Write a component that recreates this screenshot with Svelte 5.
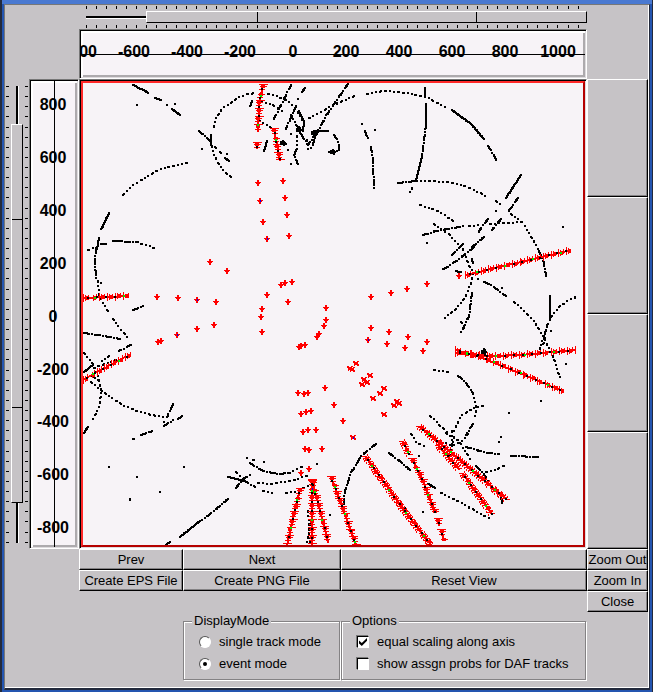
<script>
  let mode = $state('event');
  let equalScaling = $state(true);
  let showProbs = $state(false);
  let xRange = $state(100);
  let yRange = $state(49);

  const xLabels = [-800, -600, -400, -200, 0, 200, 400, 600, 800, 1000];
  const yLabels = [800, 600, 400, 200, 0, -200, -400, -600, -800];

  // Detector hits: s = unbroken run, d = dashed run, p = dotted run
  const hits = `s 132,84 148,92
s 154,97 160,99
p 136,104
p 166,104
p 174,103
s 171,108 179,114
d 198,130 210,141
s 210,134 210,144
p 201,148
p 214,146 216,148
p 219,151 222,153
p 226,153
s 224,157 228,160
p 213,126 215,117 220,109 228,103 237,97 247,93 255,92
p 267,93 275,95 283,98 292,104 298,113 303,122
p 211,145 213,153 217,162 222,169 231,177
p 186,162 171,165 157,169 145,176 130,186 120,196
s 108,212 100,229
s 98,237 96,248
p 87,249 95,246
s 100,243 105,243
s 112,240 121,240
d 124,241 137,241
p 140,243 148,245 156,248
d 95,247 94,262 95,277
p 97,280 98,293 102,302 107,310
p 100,282
p 112,318 120,329 128,338
d 132,309 143,305
d 83,332 97,334 108,336 119,338
d 130,344 118,350
p 108,355 100,361
p 115,359 95,366
p 83,352 92,363 98,378 100,388 99,405 92,418
s 83,371 93,363
d 90,375 98,379
p 90,381 102,391 115,400 130,408 140,411 150,414 163,416
d 172,403 166,416
p 163,421
d 163,425 173,419
d 177,418 182,415
s 87,426 83,432
p 132,438 136,437
d 140,434 152,430
p 108,466
p 136,476
p 159,491
p 129,498 129,501
p 183,466
d 227,498 213,510 200,520
s 199,520 179,536
s 169,541 164,544
d 249,462 262,470 277,473 288,472
p 288,472 302,465
p 246,457
p 252,459 254,460
p 263,461
p 316,463
s 227,476 243,480
d 243,480 254,486
d 235,487 242,478 249,474
p 235,471 239,475
p 257,482 268,483 283,481 293,479 308,474
p 262,490 273,492
p 285,492 297,490 308,484
p 310,523 305,544
p 307,510 309,544
s 251,100 249,105
p 260,101 270,103 283,111
d 290,84 273,118
d 304,87 301,91
p 297,98
d 295,105 285,128
d 347,83 333,103 325,115 317,130 310,148
p 308,117 335,103 356,94
p 366,93 382,90 398,91 412,93 427,97 435,101 444,106
s 451,109 470,123 483,138
d 487,145 497,161
p 258,119 272,128
s 266,140 263,150
d 290,114 303,138 307,144 316,131
s 298,110 303,121 302,130
s 313,130 327,130
d 333,134 338,142 338,150 328,151
p 296,135 296,148
d 295,149 293,154 297,163
p 290,163
p 287,149
p 290,133
p 306,139 307,148
p 285,143
p 361,123
p 374,129
d 364,130 368,140
d 370,146 372,160 373,187
d 397,182 415,180
p 415,180 428,180 447,181 467,186 485,195
p 495,200 499,203
p 510,213 522,222 530,235 538,249
p 411,187 408,193
p 495,210
s 424,87 424,95
s 425,103 425,123
d 425,123 423,140 421,155
s 421,155 415,180
s 520,174 505,197
d 517,197 507,211
p 419,204 437,210 452,220
d 487,218 476,233
d 500,218 491,229
p 489,223 520,221
d 422,234 435,230 453,227 462,225
p 468,225 480,224
p 433,223 450,235 457,243
p 426,242
d 483,236 469,248
d 462,243 449,256
d 473,246 457,259 440,270
p 462,248 467,262 472,272 471,280 465,295 453,310 443,317
s 471,258 472,262
d 471,292 468,315 460,332
p 460,321 464,327
d 455,270 462,272
p 477,278
d 483,281 490,284 505,295
p 513,301 520,307 533,320 543,337 552,355 559,377
p 501,287
d 538,250 543,262 545,275
s 549,295 549,318
p 549,318 543,335 538,350
p 546,324 542,345
p 550,316 558,306 570,298 575,296
p 550,330
p 565,363
p 540,400
p 508,412
p 562,226
p 433,369 448,371
d 457,375 462,378 472,392
p 472,392 475,407 474,418
d 472,423 465,434
p 482,405 472,407 460,415 452,432
p 429,415 448,433
d 375,443 360,455 350,472 344,490 342,508
p 329,514
d 388,452 400,461 410,470
s 427,483 434,487
p 440,492 458,501 475,510 488,517
p 418,455
p 422,511
p 404,507
p 410,433 415,441 423,445
p 467,433 460,441 450,445 442,440
p 451,430 451,446
p 445,432 458,440 469,458
d 465,446 475,449 488,452 499,453
d 510,455 538,456
p 500,436
p 498,441
d 475,465 482,472 488,482
p 485,471 495,469 504,464
d 500,497 502,504
p 453,436 449,455`.split('\n');

  const clusters = [[298, 129, 4], [282, 142, 3], [313, 132, 3], [332, 151, 3], [483, 351, 4]];

  const tracks = [
    '262,84 258,103 257,130', '256,142 256,147', '273,128 279,160',
    '465,274 571,249', '455,352 490,355 520,354 575,349', '455,349 480,356 562,390',
    '83,297 128,295', '83,379 100,369 131,353',
    '419,426 452,453 505,498', '438,445 458,468', '462,473 491,513',
    '402,441 408,453', '411,458 422,480 434,512', '437,518 438,524', '440,529 443,539',
    '365,456 400,505 430,544', '330,476 342,508 355,544',
    '299,488 293,513 286,544', '311,479 311,544', '311,480 320,513 327,541'
  ];

  const points = `258,182 260,200 263,221 267,238 283,180 285,197 287,214 289,235 210,261 227,270
157,296 178,297 197,299 216,301 214,324 197,328 177,334 158,341 161,340 281,284 285,282 292,281 267,294
288,301 262,308 261,316 262,331 326,307 326,319 324,325 319,333 317,336 305,344 299,346 301,345 371,296
391,292 407,288 371,327 368,339 389,331 387,343 408,336 405,347 356,363 350,368 352,369 370,375 364,379
367,382 362,384 384,388 380,393 373,398 397,401 399,403 394,405 384,414 298,392 304,393 308,392 325,387
334,404 343,420 301,413 306,411 311,410 303,431 308,429 316,429 427,283 427,341 423,350 353,437 305,448
309,449 322,448 309,468 301,472 459,275`.split(/\s+/).map((p) => p.split(',').map(Number));

  const diagonal = (x, y) => x > 345 && y > 360;
  const blueHits = [[260, 200], [267, 238], [197, 299], [177, 334], [368, 339], [353, 437], [312, 488]];

  const parse = (text) => text.split(' ').map((p) => p.split(',').map(Number));

  function walk(line, step) {
    const out = [];
    let carry = 0;
    for (let i = 1; i < line.length; i++) {
      const [x0, y0] = line[i - 1];
      const [x1, y1] = line[i];
      const len = Math.hypot(x1 - x0, y1 - y0);
      let t = carry;
      for (; t <= len; t += step) {
        out.push([Math.round(x0 + ((x1 - x0) * t) / len), Math.round(y0 + ((y1 - y0) * t) / len)]);
      }
      carry = t - len;
    }
    return line.length === 1 ? line : out;
  }

  const cell = ([x, y], w = 2, h = 2) => `M${x} ${y}h${w}v${h}h${-w}z`;

  // Which steps of a run carry a mark; uneven on purpose, like the hits
  const keep = {
    s: () => true,
    d: (i) => i % 11 < 6 || i % 11 === 8,
    p: (i) => [0, 1, 5, 9, 13, 14].includes(i % 18)
  };

  const hitPath = hits
    .map((row) =>
      walk(parse(row.slice(2)), 1)
        .filter((_, i) => keep[row[0]](i))
        .map((p) => cell(p))
        .join('')
    )
    .join('');

  const clusterPath = clusters
    .map(([x, y, r]) =>
      cell([x - 2, y - 1], 5, 4) +
      Array.from({ length: 14 }, (_, i) =>
        cell([x + Math.round(Math.cos(i * 2.4) * r * ((i % 4) / 3)), y + Math.round(Math.sin(i * 2.4) * r * ((i % 3) / 2.5))])
      ).join('')
    )
    .join('');

  const trackPoints = tracks.map((t) => walk(parse(t), 1));
  const trackPath = trackPoints
    .map((pts) => {
      const [a, b] = [pts[0], pts[pts.length - 1]];
      const dx = Math.abs(b[0] - a[0]);
      const dy = Math.abs(b[1] - a[1]);
      const flat = dx > dy * 1.6;
      const steep = dy > dx * 2.2;
      return pts
        .map(([x, y], i) => {
          let d = cell([x, y], flat ? 1 : 2, 2);
          const n = (i * 7) % 4;
          if (i % 17 !== 8 && [0, 2, 5].includes(i % 8)) {
            if (flat) d += cell([x, y - 3 + (n >> 1)], 1, 8 - n);
            else if (steep) d += cell([x - 3 + (n >> 1), y], 9 - n, 1);
            else d += cell([x - 3, y], 3, 1) + cell([x - 2, y + 2], 1, 2) + cell([x + 2, y - 2], 1, 2) + cell([x + 1, y + 1], 4, 1);
          }
          if (i % 8 === 2) {
            d += flat ? cell([x, y - 1], 3, 4) : cell([x - 1, y - 1], 4, 3);
          }
          return d;
        })
        .join('');
    })
    .join('');
  const pick = (every, at) =>
    trackPoints.map((pts) => pts.filter((_, i) => i % every === at).map((p) => cell(p, 2, 2)).join('')).join('');
  const trackBlack = pick(9, 4);
  const trackGreen = pick(29, 11);

  const pointPath = points
    .map(([x, y]) =>
      diagonal(x, y)
        ? cell([x - 2, y - 1], 4, 3) + cell([x - 3, y - 2]) + cell([x + 1, y - 2], 2, 1) + cell([x - 2, y + 2], 1, 1) + cell([x + 1, y + 1])
        : cell([x - 3, y], 6, 1) + cell([x - 2, y], 4, 2) + cell([x - 1, y - 2], 2, 6)
    )
    .join('');
  const bluePath = blueHits.map((p) => cell(p, 1, 2)).join('');
</script>

{#snippet ticks(count)}
  <div class="ticks">
    {#each Array(count) as _}<span></span>{/each}
  </div>
{/snippet}

<main class="window">
  <div class="panel">
    <div class="slider across">
      {@render ticks(50)}
      <input type="range" aria-label="Horizontal range" bind:value={xRange} />
      {@render ticks(50)}
    </div>

    <div class="sunken axis x-axis">
      <svg>
        <line x1="0" x2="100%" y1="23.5" y2="23.5" />
        {#each xLabels as label, i}
          <text x="{(i * 53 * 100) / 504}%" y="26">{label}</text>
        {/each}
      </svg>
    </div>

    <div class="slider down">
      {@render ticks(46)}
      <input type="range" aria-label="Vertical range" bind:value={yRange} />
      {@render ticks(46)}
    </div>

    <div class="sunken axis y-axis">
      <svg>
        <line x1="23.5" x2="23.5" y1="0" y2="100%" />
        {#each yLabels as label, i}
          <text x="22" y="{((29 + i * 52.9) * 100) / 466}%">{label}</text>
        {/each}
      </svg>
    </div>

    <div class="sunken plot">
      <div class="canvas">
        <svg viewBox="83 83 500 462" role="img" aria-label="Event display">
          <path d={hitPath} />
          <path d={trackPath} fill="#f00" />
          <path d={pointPath} fill="#f00" />
          <path d={trackBlack} />
          <path d={trackGreen} fill="#0e0" />
          <path d={bluePath} fill="#00f" />
          <path d={clusterPath} />
        </svg>
      </div>
    </div>

    <div class="side">
      <button aria-label="View 1"></button>
      <button aria-label="View 2"></button>
      <button aria-label="View 3"></button>
      <button aria-label="View 4"></button>
    </div>

    <button class="first">Prev</button>
    <button>Next</button>
    <button aria-label="Blank"></button>
    <button>Zoom Out</button>
    <button class="first">Create EPS File</button>
    <button>Create PNG File</button>
    <button>Reset View</button>
    <button>Zoom In</button>
    <button class="close">Close</button>

    <fieldset class="mode">
      <legend>DisplayMode</legend>
      <label><input type="radio" name="mode" value="single" bind:group={mode} />single track mode</label>
      <label><input type="radio" name="mode" value="event" bind:group={mode} />event mode</label>
    </fieldset>
    <fieldset class="options">
      <legend>Options</legend>
      <label><input type="checkbox" bind:checked={equalScaling} />equal scaling along axis</label>
      <label><input type="checkbox" bind:checked={showProbs} />show assgn probs for DAF tracks</label>
    </fieldset>
  </div>
</main>

<style>
  .window {
    box-sizing: border-box;
    min-height: 100vh;
    display: flex;
    padding: 4px 2px 2px;
    border: solid #232a3c;
    border-width: 0 1px 0 2px;
    background: linear-gradient(#4a79d1 4px, #2455b0 4px);
    font: 13px/16px "Liberation Sans", Arial, sans-serif;
    color: #000;
  }

  .panel {
    flex: 1;
    min-width: 0;
    display: grid;
    grid-template-columns: 24px 50px minmax(0, 104fr) minmax(0, 158fr) minmax(0, 246fr) 61px;
    grid-template-rows: 24px 50px auto 21px 21px 21px auto;
    align-content: start;
    padding-right: 1px;
    border: 1px solid #777;
    border-right-color: #232a3c;
    border-bottom: 2px solid #232a3c;
    box-shadow: inset -1px -1px #fff;
    background: #c6c3c6;
  }

  .slider {
    display: flex;
    justify-content: space-between;
  }

  .across {
    grid-column: 3 / 6;
    flex-direction: column;
    padding: 1px 0 1px 7px;
  }

  .down {
    grid-column: 1;
    padding: 7px 1px 6px;
  }

  /* The plot alone sets the height of its row */
  .down,
  .y-axis,
  .side {
    contain: size;
  }

  .ticks {
    display: flex;
    justify-content: space-between;
  }

  .ticks span {
    background: #000;
  }

  .across .ticks {
    padding-right: 8px;
  }

  .across span {
    width: 1px;
    height: 3px;
  }

  .down .ticks {
    flex-direction: column;
  }

  .down span {
    width: 3px;
    height: 1px;
  }

  input {
    appearance: none;
    margin: 0;
  }

  .across input {
    width: 100%;
    height: 12px;
    background: linear-gradient(#000 2px, #fff 2px) 0 5px / 100% 3px no-repeat;
  }

  .across input::-webkit-slider-thumb {
    appearance: none;
    box-sizing: border-box;
    width: 88%;
    height: 12px;
    border: solid;
    border-width: 1px;
    border-color: #fff #000 #000 #fff;
    background:
      linear-gradient(#000, #000) 25% 0 / 1px 100% no-repeat,
      linear-gradient(#000, #000) 75% 0 / 1px 100% no-repeat,
      #c6c3c6;
  }

  .down input {
    writing-mode: vertical-lr;
    width: 12px;
    height: 100%;
    background: linear-gradient(90deg, #000 2px, #fff 2px) 5px 0 / 3px 100% no-repeat;
  }

  .down input::-webkit-slider-thumb {
    appearance: none;
    box-sizing: border-box;
    width: 12px;
    height: 83%;
    border: solid;
    border-width: 1px;
    border-color: #fff #000 #000 #fff;
    background:
      linear-gradient(#000, #000) 0 25% / 100% 1px no-repeat,
      linear-gradient(#000, #000) 0 75% / 100% 1px no-repeat,
      #c6c3c6;
  }

  .sunken {
    display: flex;
    padding: 1px;
    border: solid;
    border-width: 1px;
    border-color: #777 #fff #fff #777;
    box-shadow: inset 1px 1px #000, inset -1px -1px #dedbde;
    background: #f7f3f7;
  }

  .axis {
    box-shadow: inset 1px 1px #000, inset -1px -1px #dedbde, inset 3px 3px #fff, inset -3px -3px #adaaad;
  }

  .axis svg {
    flex: 1;
    width: 100%;
    min-width: 0;
    height: auto;
    min-height: 0;
    overflow: hidden;
  }

  .axis line {
    stroke: #000;
  }

  .axis text {
    font-size: 16px;
    font-weight: bold;
    text-anchor: middle;
  }

  .x-axis,
  .plot {
    grid-column: 3 / 6;
  }

  .canvas {
    flex: 1;
    border: 2px solid;
    border-color: #ff2828 #b50000 #b50000 #ff2828;
  }

  .canvas svg {
    display: block;
    width: 100%;
    shape-rendering: crispEdges;
  }

  .side {
    display: flex;
    flex-direction: column;
  }

  .side button {
    flex: 1;
  }

  button {
    min-width: 0;
    padding: 0;
    border: solid;
    border-width: 1px;
    border-color: #fff #000 #000 #fff;
    box-shadow: inset -1px -1px #848284;
    background: #c6c3c6;
    font: inherit;
    color: inherit;
    white-space: nowrap;
  }

  .first {
    grid-column: 3;
  }

  .close {
    grid-column: 6;
  }

  fieldset {
    min-width: 0;
    margin: 1px 1px 0 0;
    padding: 2px 15px 4px;
    border: 1px solid #848284;
    box-shadow: 1px 1px #fff, inset 1px 1px #fff;
  }

  .mode {
    grid-column: 4;
  }

  .options {
    grid-column: 5;
  }

  legend {
    margin-left: -7px;
    padding: 0 2px;
    background: #c6c3c6;
  }

  label {
    display: flex;
    align-items: center;
    gap: 8px;
    height: 22px;
    white-space: nowrap;
  }

  label input {
    flex: none;
    box-sizing: border-box;
    width: 12px;
    height: 12px;
    border: 1px solid;
    border-color: #555 #fff #fff #555;
    background: #fff;
  }

  input[type="radio"] {
    border-radius: 50%;
  }

  input[type="radio"]:checked::before {
    content: "";
    display: block;
    width: 4px;
    height: 4px;
    margin: 3px;
    border-radius: 50%;
    background: #000;
  }

  input[type="checkbox"] {
    border-color: #000 #fff #fff #000;
    box-shadow: -1px -1px #777;
  }

  input[type="checkbox"]:checked::before {
    content: "";
    display: block;
    width: 8px;
    height: 8px;
    margin: 1px;
    background: #000;
    clip-path: polygon(0 30%, 35% 62%, 100% 0, 100% 35%, 35% 100%, 0 68%);
  }
</style>
